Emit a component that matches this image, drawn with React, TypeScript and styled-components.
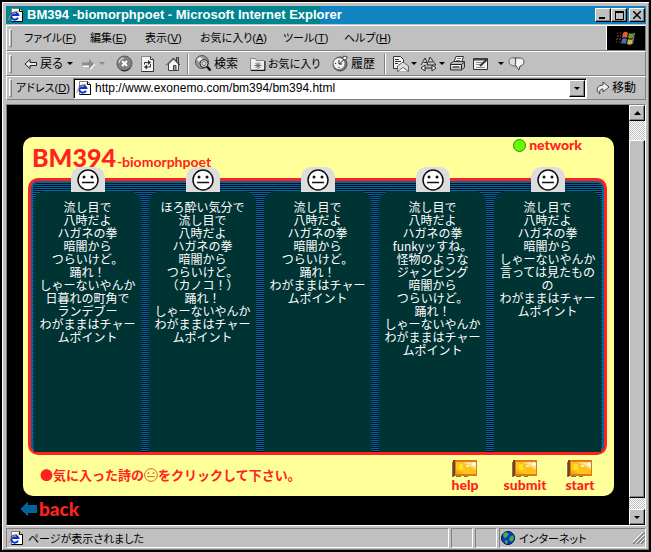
import React from "react";
import styled, { createGlobalStyle } from "styled-components";

const UI_FONT = '"Liberation Sans", "Noto Sans CJK JP", sans-serif';
const JP_FONT = '"Noto Sans CJK JP", sans-serif';
const DISPLAY_FONT = 'Lato, "Liberation Sans", sans-serif';
const RED = "#ff2222";

const GlobalStyle = createGlobalStyle`
  * { box-sizing: border-box; }
  body { margin: 0; background: #000; font: 12px/16px ${UI_FONT}; color: #000; }
  button, input { font: inherit; color: inherit; margin: 0; }
  a { color: inherit; text-decoration: none; }
`;

const Window = styled.div`
  min-height: 100vh;
  display: flex;
  flex-direction: column;
  padding: 2px 2px 2px 3px;
  background: #c0c0c0;
  border: 2px solid #000;
  box-shadow: inset 2px 2px 0 -1px #fff, inset -1px -1px 0 #808080;
`;

const TitleBar = styled.header`
  height: 18px;
  margin: 2px 1px 1px;
  padding: 0 1px 0 2px;
  display: flex;
  align-items: center;
  gap: 3px;
  color: #fff;
  background: linear-gradient(90deg, #008490 0 49%, #1084c0 49%);
`;

const Title = styled.h1`
  flex: 1;
  margin: 0;
  font: bold 13px/18px "Liberation Sans", sans-serif;
  white-space: nowrap;
`;

const WindowButtons = styled.div`
  display: flex;
`;

const BevelButton = styled.button<{ $w?: number; $h?: number; $gap?: number }>`
  width: ${(p) => p.$w ?? 16}px;
  height: ${(p) => p.$h ?? 14}px;
  margin-left: ${(p) => p.$gap ?? 0}px;
  padding: 0;
  flex: none;
  display: flex;
  align-items: center;
  justify-content: center;
  background: #c0c0c0;
  border: 1px solid;
  border-color: #fff #000 #000 #fff;
  box-shadow: inset -1px -1px 0 #808080;
`;

const Band = styled.div<{ $h: number }>`
  height: ${(p) => p.$h}px;
  margin: 0 1px;
  display: flex;
  align-items: center;
  border: 1px solid;
  border-color: #fff #808080 #808080 #fff;
`;

const Grip = styled.span`
  flex: none;
  width: 3px;
  height: 18px;
  margin: 0 4px 0 2px;
  border: 1px solid;
  border-color: #fff #808080 #808080 #fff;
`;

const Menus = styled.nav`
  flex: 1;
  display: grid;
  grid-template-columns: 66px 55px 55px 83px 61px 60px;
  padding-left: 8px;
`;

const PlainButton = styled.button<{ $small?: boolean }>`
  display: flex;
  align-items: center;
  gap: 2px;
  padding: 0;
  border: 0;
  background: none;
  white-space: nowrap;
  font-family: "Liberation Sans", ${JP_FONT};
  font-size: ${(p) => (p.$small ? 11 : 12)}px;
  font-feature-settings: "palt";
`;

const WindowsFlag = styled.div`
  align-self: stretch;
  width: 39px;
  display: flex;
  align-items: center;
  justify-content: center;
  background: #000;
  border-left: 1px solid #fff;
`;

const ToolGroup = styled.div<{ $w: number }>`
  width: ${(p) => p.$w}px;
  flex: none;
  display: flex;
  align-items: center;
  gap: 4px;
`;

const BackGroup = styled(ToolGroup)`
  padding-left: 8px;
`;

const Separator = styled.span`
  flex: none;
  width: 2px;
  height: 20px;
  margin-right: 6px;
  border-left: 1px solid #808080;
  border-right: 1px solid #fff;
`;

const AddressLabel = styled.label`
  flex: none;
  width: 57px;
  white-space: nowrap;
  font-size: 11px;
  font-feature-settings: "palt";
`;

const AddressBox = styled.div`
  flex: 1;
  height: 21px;
  display: flex;
  align-items: center;
  padding: 0 1px 0 2px;
  background: #fff;
  border: 1px solid;
  border-color: #808080 #fff #fff #808080;
  box-shadow: inset 1px 1px 0 #000;
`;

const AddressInput = styled.input`
  flex: 1;
  min-width: 0;
  padding: 0 0 0 3px;
  border: 0;
  outline: 0;
  background: transparent;
`;

const GoWrap = styled.div`
  width: 58px;
  flex: none;
  padding-left: 9px;
`;

const View = styled.div`
  flex: 1;
  display: flex;
  margin: 4px 1px 0;
  border: 1px solid;
  border-color: #808080 #fff #fff #808080;
  background: #000;
`;

const Page = styled.main`
  flex: 1;
  min-width: 0;
  padding: 32px 15px 5px 16px;
`;

const Card = styled.section`
  background: #ffff99;
  border-radius: 10px;
  padding: 0 7px 0 5px;
`;

const CardHead = styled.div`
  height: 41px;
  display: flex;
  justify-content: space-between;
  padding: 0 25px 0 4px;
  color: ${RED};
  font-family: ${DISPLAY_FONT};
  font-weight: 900;
`;

const Logo = styled.h2`
  margin: 0;
  padding-top: 4px;
  font-size: 25px;
  font-weight: 900;
  line-height: 32px;
  white-space: nowrap;
`;

const LogoTail = styled.span`
  margin-left: 1px;
  font-size: 14px;
  font-weight: 700;
`;

const NetworkLink = styled.a`
  display: flex;
  align-items: center;
  gap: 3px;
  height: 16px;
  font-size: 14px;
  line-height: 16px;
`;

const Dot = styled.span`
  width: 13px;
  height: 13px;
  border-radius: 50%;
  background: #66ff00;
  border: 1px solid #228b22;
`;

const Board = styled.div`
  display: flex;
  gap: 8px;
  padding: 10px 3px 0;
  border: 3px solid ${RED};
  border-radius: 10px;
  background: repeating-linear-gradient(180deg, #001122 0 1px, #006699 1px 2px);
  box-shadow: inset 0 2px 0 #006699, inset 2px 0 0 #006699, inset -2px 0 0 #006699;
`;

const Poem = styled.article`
  flex: 1;
  min-width: 0;
  min-height: 261px;
  display: flex;
  flex-direction: column;
  align-items: center;
  background: #003333;
  border-radius: 12px 12px 0 0;
  color: #fff;
`;

const FaceTab = styled.button`
  flex: none;
  width: 34px;
  height: 25px;
  margin: -24px 0 8px;
  padding: 0;
  display: flex;
  align-items: center;
  justify-content: center;
  border: 0;
  border-radius: 10px 10px 0 0;
  background: #dddddd;
`;

const Verse = styled.p`
  margin: 0;
  font: 12px/13px ${JP_FONT};
  text-align: center;
  white-space: pre;
`;

const CardFoot = styled.div`
  height: 41px;
  display: flex;
  align-items: flex-start;
  justify-content: space-between;
  padding: 5px 8px 0 12px;
  color: ${RED};
`;

const Hint = styled.p`
  margin: 0;
  padding-top: 7px;
  display: flex;
  align-items: center;
  font: bold 13px/16px ${JP_FONT};
  white-space: nowrap;
`;

const Actions = styled.div`
  display: grid;
  grid-template-columns: 48px 72px 38px;
`;

const Action = styled.button`
  padding: 0;
  border: 0;
  background: none;
  display: flex;
  flex-direction: column;
  align-items: center;
  color: ${RED};
  font: 900 14px/16px ${DISPLAY_FONT};
`;

const BackLink = styled.a`
  width: max-content;
  margin: 4px 0 0 -3px;
  display: flex;
  align-items: center;
  gap: 2px;
  color: ${RED};
  font: 900 19px/18px ${DISPLAY_FONT};
`;

const ScrollBar = styled.div`
  flex: none;
  width: 16px;
  display: flex;
  flex-direction: column;
  background: repeating-conic-gradient(#fff 0 25%, #c0c0c0 0 50%) 0 0 / 2px 2px;
`;

const Thumb = styled.div`
  flex: 1;
  margin: 19px 0 11px;
  background: #c0c0c0;
  border: 1px solid;
  border-color: #fff #000 #000 #fff;
  box-shadow: inset -1px -1px 0 #808080;
`;

const StatusBar = styled.footer`
  height: 20px;
  margin: 2px 1px 0;
  display: flex;
  gap: 2px;
`;

const StatusCell = styled.div<{ $w?: number }>`
  ${(p) => (p.$w ? `width: ${p.$w}px; flex: none;` : "flex: 1;")}
  display: flex;
  align-items: center;
  gap: 4px;
  padding-left: 1px;
  border: 1px solid;
  border-color: #808080 #fff #fff #808080;
  font: 11px/16px ${JP_FONT};
  font-feature-settings: "palt";
  white-space: nowrap;
`;

const Spacer = styled.span`
  flex: 1;
`;

const IePage = () => (
  <svg width="16" height="16" viewBox="0 0 16 16">
    <path d="M3.500 1.500h8l3 3v10h-11z" fill="#fff" stroke="#808080" />
    <path d="M11.500 1.500v3h3" fill="none" stroke="#000" />
    <path d="M14.500 4.500v10h-11" fill="none" stroke="#000" />
    <path d="M10 10.800A3.600 3.600 0 1 1 10.300 8H4" fill="none" stroke="#0033dd" strokeWidth="2" />
    <path d="M1 13C0 10 6 4 11 4" fill="none" stroke="#e0a020" />
  </svg>
);

const Caret = ({ color = "#000" }: { color?: string }) => (
  <svg width="6" height="3" viewBox="0 0 6 3">
    <path d="M0 0h6L3 3z" fill={color} />
  </svg>
);

const Arrow = ({ flip = false }: { flip?: boolean }) => (
  <svg width="14" height="12" viewBox="0 0 14 12">
    {flip ? (
      <>
        <path d="M14 7 9 12V9H2V6h12z" fill="#fff" />
        <path d="M13 6 8 1v3.500H1v3h7V11z" fill="#8c8c8c" />
      </>
    ) : (
      <path d="M1 6l5-4.500V4.500h6.500v3H6v3z" fill="#eee" stroke="#222" />
    )}
  </svg>
);

const StopIcon = () => (
  <svg width="17" height="17" viewBox="0 0 17 17">
    <circle cx="8.500" cy="8.500" r="7.500" fill="#808080" stroke="#555" />
    <path d="M14 13a7 7 0 0 1-9 2" fill="none" stroke="#222" />
    <path d="M3 8a5.500 5.500 0 0 1 5-5" fill="none" stroke="#ccc" strokeWidth="1.500" />
    <path d="M6 6l5 5M11 6l-5 5" stroke="#fff" strokeWidth="2" />
  </svg>
);

const RefreshIcon = () => (
  <svg width="15" height="16" viewBox="0 0 15 16">
    <path d="M1.500.5h9l3 3v12h-12z" fill="#f4f4f4" stroke="#888" />
    <path d="M10.500.5v3h3v12h-12" fill="none" stroke="#333" />
    <path d="M4.500 8.500V6.500h4M10.500 8v3h-4" fill="none" stroke="#333" />
    <path d="M8 4v5l3-2.500zM7 8.500v5L4 11z" fill="#333" />
  </svg>
);

const HomeIcon = () => (
  <svg width="16" height="16" viewBox="0 0 16 16">
    <path d="M11.500 1.500v5l2 2v-7z" fill="#aaa" stroke="#333" />
    <path d="M3.500 8v6.500h10V8L8.500 3z" fill="#f4f4f4" stroke="#444" />
    <path d="M1 9.500l7.500-7.500L15 9" fill="none" stroke="#333" />
    <path d="M8.500 9.500h2.500v5H8.500z" fill="#999" stroke="#444" />
  </svg>
);

const SearchIcon = () => (
  <svg width="17" height="17" viewBox="0 0 17 17">
    <circle cx="7" cy="7" r="6.500" fill="#9a9a9a" stroke="#555" />
    <path d="M2 4l3-2 3 2-2 3-3-1z" fill="#eee" />
    <circle cx="9" cy="8.500" r="4" fill="#ddd" stroke="#222" />
    <circle cx="9" cy="8.500" r="2" fill="none" stroke="#777" />
    <path d="M12 11.500l3.500 4" stroke="#111" strokeWidth="2.500" />
  </svg>
);

const FolderIcon = () => (
  <svg width="16" height="14" viewBox="0 0 16 14">
    <path d="M.5 13V1.500h5l1 2h8V13z" fill="#eee" stroke="#888" />
    <path d="M1 13.500h14V4" fill="none" stroke="#111" />
    <path d="M8 5v7M4.500 8.500h7M5.500 6l5 5M10.500 6l-5 5" stroke="#666" />
  </svg>
);

const HistoryIcon = () => (
  <svg width="17" height="17" viewBox="0 0 17 17">
    <circle cx="8" cy="9" r="7" fill="#777" stroke="#444" />
    <circle cx="7" cy="8.500" r="5.500" fill="#f2f2f2" />
    <path d="M3 8.500h1M7 13v-1M7 9V5M7.500 9l6-6M7 9h3" stroke="#222" />
    <path d="M10.500 4l1-3 4 1-2 3z" fill="#fff" stroke="#444" />
  </svg>
);

const MailIcon = () => (
  <svg width="17" height="16" viewBox="0 0 17 16">
    <path d="M1.500.5h7l3 3v9h-10z" fill="#f4f4f4" stroke="#333" />
    <path d="M3 3.500h4M3 5.500h6M3 7.500h3" stroke="#333" />
    <path d="M5.500 10l5.500-4 5.500 4v5.500h-11z" fill="#ddd" stroke="#666" />
    <path d="M5.500 15.500l5.500-4 5.500 4" fill="#fff" stroke="#666" />
  </svg>
);

const TextSizeIcon = () => (
  <svg width="17" height="15" viewBox="0 0 17 15">
    <path d="M1 9l4-7 3 7M7 9l3-8 6 8z" fill="#ccc" stroke="#333" />
    <path d="M3.500 6.500h4M9 6h4" stroke="#333" />
    <path d="M2 12h12" stroke="#222" />
    <path d="M5 9v6l-4-3zM12 9v6l4-3z" fill="#fff" stroke="#222" />
  </svg>
);

const PrintIcon = () => (
  <svg width="17" height="15" viewBox="0 0 17 15">
    <path d="M5 6l2-5.500h7.500L12.500 6" fill="#fff" stroke="#333" />
    <path d="M8 2.500h4M7 4.500h4" stroke="#777" />
    <path d="M1.500 7.500l3-2h11v6l-3 2.500h-11z" fill="#bbb" stroke="#333" />
    <path d="M2 8.500h10.500v5M12.500 8.500l3-2.500M4 11h6" fill="none" stroke="#222" />
    <path d="M2 9.500h10" stroke="#fff" />
  </svg>
);

const EditIcon = () => (
  <svg width="16" height="14" viewBox="0 0 16 14">
    <path d="M.5 1.500h14v11H.5z" fill="#f3f3f3" stroke="#333" />
    <path d="M1 2.500h13" stroke="#444" strokeWidth="2" />
    <path d="M3 5.500h6M3 7.500h4M3 10.500h9" stroke="#888" />
    <path d="M7 9l7.500-7" stroke="#333" strokeWidth="2" />
  </svg>
);

const DiscussIcon = () => (
  <svg width="17" height="14" viewBox="0 0 17 14">
    <path d="M8 1C3 0 1 2 1 4.500S3 9 6 9h2z" fill="#ddd" stroke="#666" />
    <path d="M7 1h4c4 0 5 2 5 4s-2 4-4 4l-1 4-3-4C6 8 9 3 7 1z" fill="#f4f4f4" stroke="#444" />
  </svg>
);

const GoIcon = () => (
  <svg width="14" height="14" viewBox="0 0 14 14">
    <path d="M4 13C-1 10 1 4 7 4V1l6 5-6 5V8c-3 0-4 2-3 5z" fill="#eee" stroke="#444" />
  </svg>
);

const FlagIcon = () => (
  <svg width="20" height="16" viewBox="0 0 20 16">
    <path d="M7 3c2-2 4-1 5 0l-1 5c-2-1-3-1-5 0z" fill="#d86030" />
    <path d="M13 3c2 1 3 1 5 0l-1 5c-2 1-3 1-5 0z" fill="#6a9a30" />
    <path d="M6 9c2-1 3-1 5 0l-1 5c-2-1-3-1-5 0z" fill="#4070b8" />
    <path d="M12 9c2 1 3 1 5 0l-1 5c-2 1-3 1-5 0z" fill="#d8b040" />
    <path d="M1 3h1M4 3h1M1 6h2M4 6h1M0 9h2M3 9h2M0 12h1M3 12h1" stroke="#a05040" />
    <path d="M18.500 3l-2 11" stroke="#888" fill="none" />
  </svg>
);

const Face = ({ size, color = "#111", fill = "#fff" }: { size: number; color?: string; fill?: string }) => (
  <svg width={size} height={size} viewBox="0 0 22 22">
    <circle cx="11" cy="11" r="10" fill={fill} stroke={color} strokeWidth="1.500" />
    <circle cx="7" cy="8" r="1.500" fill={color} />
    <circle cx="15" cy="8" r="1.500" fill={color} />
    <path d="M5 13.500h12" stroke={color} strokeWidth="1.500" />
  </svg>
);

const Gem = () => (
  <svg width="26" height="17" viewBox="0 0 26 17">
    <defs>
      <linearGradient id="gem" x1="0" y1="1" x2="1" y2="0">
        <stop offset="0" stopColor="#ee9911" />
        <stop offset="0.3" stopColor="#ffcc11" />
        <stop offset="0.6" stopColor="#ffbb20" />
        <stop offset="0.8" stopColor="#ffeea0" />
        <stop offset="1" stopColor="#ee9922" />
      </linearGradient>
    </defs>
    <path d="M0 2h2v15H0zM4 16h5v1H4zM12 16h4v1h-4z" fill="#777766" />
    <path d="M1 0h24v16H1z" fill="#e07a18" />
    <path d="M1 0h2v16H1z" fill="#774411" />
    <path d="M4 2h20v12H4z" fill="url(#gem)" />
    <path d="M7 4h4v6H7z" fill="#ffe030" />
    <path d="M14 5h3v2h-3z" fill="#fff0b0" />
    <circle cx="22" cy="4" r="2" fill="#fff" />
  </svg>
);

const BackArrow = () => (
  <svg width="17" height="14" viewBox="0 0 17 14" shapeRendering="crispEdges">
    <path d="M0 7l8-7v3h9v8H8v3z" fill="#006699" />
  </svg>
);

const Globe = () => (
  <svg width="14" height="14" viewBox="0 0 14 14">
    <circle cx="7" cy="7" r="6.500" fill="#1133cc" stroke="#001144" />
    <path d="M2 3l3-2 3 2-2 3-3 1zM9 6l3-2 1 3-2 4-3-2zM4 9l3 1-1 3-2-1z" fill="#33bb33" />
  </svg>
);

const SizeGrip = () => (
  <svg width="12" height="12" viewBox="0 0 12 12">
    <path d="M0 12L12 0M4 12l8-8M8 12l4-4" stroke="#808080" strokeWidth="1.500" />
    <path d="M-1 11L11-1M3 11l8-8M7 11l4-4" stroke="#fff" />
  </svg>
);

const menus: [string, string][] = [
  ["ファイル", "F"],
  ["編集", "E"],
  ["表示", "V"],
  ["お気に入り", "A"],
  ["ツール", "T"],
  ["ヘルプ", "H"],
];

const poems: string[][] = [
  ["流し目で", "八時だよ", "ハガネの拳", "暗闇から", "つらいけど。", "踊れ！", "しゃーないやんか", "日暮れの町角で", "ランデブー", "わがままはチャー", "ムポイント"],
  ["ほろ酔い気分で", "流し目で", "八時だよ", "ハガネの拳", "暗闇から", "つらいけど。", "（カノコ！）", "踊れ！", "しゃーないやんか", "わがままはチャー", "ムポイント"],
  ["流し目で", "八時だよ", "ハガネの拳", "暗闇から", "つらいけど。", "踊れ！", "わがままはチャー", "ムポイント"],
  ["流し目で", "八時だよ", "ハガネの拳", "funkyッすね。", "怪物のような", "ジャンピング", "暗闇から", "つらいけど。", "踊れ！", "しゃーないやんか", "わがままはチャー", "ムポイント"],
  ["流し目で", "八時だよ", "ハガネの拳", "暗闇から", "しゃーないやんか", "言っては見たもの", "の", "わがままはチャー", "ムポイント"],
];

export default function App() {
  return (
    <>
      <GlobalStyle />
      <Window>
        <TitleBar>
          <IePage />
          <Title>BM394 -biomorphpoet - Microsoft Internet Explorer</Title>
          <WindowButtons>
            <BevelButton aria-label="Minimize">
              <svg width="8" height="8"><path d="M0 6h6v2H0z" /></svg>
            </BevelButton>
            <BevelButton aria-label="Maximize">
              <svg width="9" height="9" shapeRendering="crispEdges">
                <path d="M0 0h9v9H0zM1 2v6h7V2z" fillRule="evenodd" />
              </svg>
            </BevelButton>
            <BevelButton aria-label="Close" $gap={2}>
              <svg width="8" height="8"><path d="M0 0l8 8M8 0L0 8" stroke="#000" strokeWidth="1.500" /></svg>
            </BevelButton>
          </WindowButtons>
        </TitleBar>

        <Band $h={26}>
          <Grip />
          <Menus>
            {menus.map(([label, key]) => (
              <PlainButton key={key} $small>
                <span>{label}(<u>{key}</u>)</span>
              </PlainButton>
            ))}
          </Menus>
          <WindowsFlag><FlagIcon /></WindowsFlag>
        </Band>

        <Band $h={25}>
          <Grip />
          <BackGroup $w={65}>
            <PlainButton><Arrow />戻る</PlainButton>
            <PlainButton aria-label="戻るの履歴"><Caret /></PlainButton>
          </BackGroup>
          <ToolGroup $w={35}>
            <PlainButton aria-label="進む"><Arrow flip /></PlainButton>
            <PlainButton aria-label="進むの履歴"><Caret color="#888" /></PlainButton>
          </ToolGroup>
          <ToolGroup $w={24}><PlainButton aria-label="中止"><StopIcon /></PlainButton></ToolGroup>
          <ToolGroup $w={25}><PlainButton aria-label="更新"><RefreshIcon /></PlainButton></ToolGroup>
          <ToolGroup $w={22}><PlainButton aria-label="ホーム"><HomeIcon /></PlainButton></ToolGroup>
          <Separator />
          <ToolGroup $w={55}><PlainButton><SearchIcon />検索</PlainButton></ToolGroup>
          <ToolGroup $w={82}><PlainButton $small><FolderIcon />お気に入り</PlainButton></ToolGroup>
          <ToolGroup $w={52}><PlainButton><HistoryIcon />履歴</PlainButton></ToolGroup>
          <Separator />
          <ToolGroup $w={28}><PlainButton aria-label="メール"><MailIcon /><Caret /></PlainButton></ToolGroup>
          <ToolGroup $w={29}><PlainButton aria-label="文字サイズ"><TextSizeIcon /><Caret /></PlainButton></ToolGroup>
          <ToolGroup $w={24}><PlainButton aria-label="印刷"><PrintIcon /></PlainButton></ToolGroup>
          <ToolGroup $w={35}>
            <PlainButton aria-label="編集"><EditIcon /></PlainButton>
            <Spacer />
            <PlainButton aria-label="編集の選択"><Caret /></PlainButton>
            <Spacer />
          </ToolGroup>
          <PlainButton aria-label="ディスカッション"><DiscussIcon /></PlainButton>
        </Band>

        <Band $h={24}>
          <Grip />
          <AddressLabel htmlFor="address">アドレス(<u>D</u>)</AddressLabel>
          <AddressBox>
            <IePage />
            <AddressInput id="address" defaultValue="http://www.exonemo.com/bm394/bm394.html" />
            <BevelButton aria-label="アドレスの一覧" $h={17}><Caret /></BevelButton>
          </AddressBox>
          <GoWrap><PlainButton><GoIcon />移動</PlainButton></GoWrap>
        </Band>

        <View>
          <Page>
            <Card>
              <CardHead>
                <Logo>BM394<LogoTail>-biomorphpoet</LogoTail></Logo>
                <NetworkLink href="#network"><Dot />network</NetworkLink>
              </CardHead>
              <Board>
                {poems.map((lines, i) => (
                  <Poem key={i}>
                    <FaceTab aria-label="この詩を選ぶ"><Face size={22} /></FaceTab>
                    <Verse>{lines.join("\n")}</Verse>
                  </Poem>
                ))}
              </Board>
              <CardFoot>
                <Hint>
                  ●気に入った詩の<Face size={14} color="#c86428" fill="none" />をクリックして下さい。
                </Hint>
                <Actions>
                  {["help", "submit", "start"].map((name) => (
                    <Action key={name}><Gem />{name}</Action>
                  ))}
                </Actions>
              </CardFoot>
            </Card>
            <BackLink href="#back"><BackArrow />back</BackLink>
          </Page>
          <ScrollBar>
            <BevelButton aria-label="上へ" $h={16}>
              <svg width="7" height="4"><path d="M0 4h7L3.500 0z" /></svg>
            </BevelButton>
            <Thumb />
            <BevelButton aria-label="下へ" $h={16}><Caret /></BevelButton>
          </ScrollBar>
        </View>

        <StatusBar>
          <StatusCell><IePage />ページが表示されました</StatusCell>
          <StatusCell $w={22} />
          <StatusCell $w={22} />
          <StatusCell $w={147}><Globe />インターネット<Spacer /><SizeGrip /></StatusCell>
        </StatusBar>
      </Window>
    </>
  );
}
